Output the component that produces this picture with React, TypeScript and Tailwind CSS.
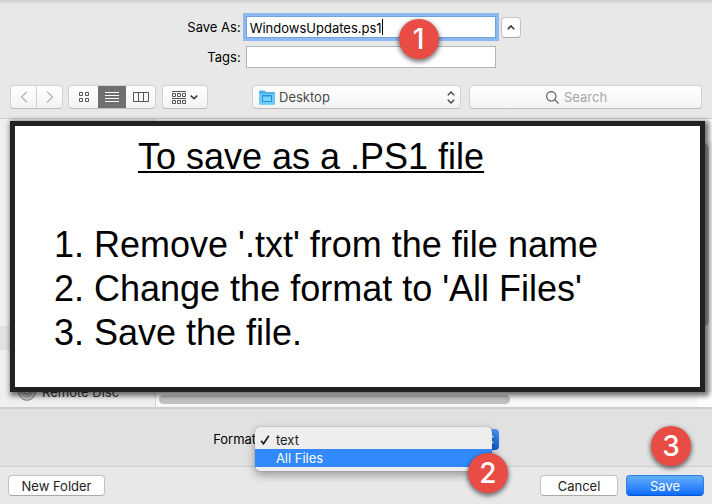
import type { ReactNode } from "react";

const steps = [
  "Remove '.txt' from the file name",
  "Change the format to 'All Files'",
  "Save the file.",
];

function Badge({ className, children }: { className: string; children: ReactNode }) {
  return (
    <span
      className={`absolute z-30 flex size-10 items-center justify-center rounded-full bg-[#e94b45] font-['Inter','Liberation_Sans',sans-serif] text-[28px] leading-8 font-medium text-white shadow-[0_2px_4px_1px_rgba(0,0,0,0.5)] ${className}`}
    >
      {children}
    </span>
  );
}

function ToolButton({ label, className, children }: { label: string; className: string; children: ReactNode }) {
  return (
    <button type="button" aria-label={label} className={`flex h-full items-center justify-center ${className}`}>
      {children}
    </button>
  );
}

const raised =
  "h-6 rounded-[4px] border border-[#d2d2d2] border-b-[#bdbdbd] bg-linear-to-b from-white to-[#f3f3f3]";
const pushButton =
  "h-[21px] rounded-[4px] border border-[#c3c3c3] border-b-[#a9a9a9] bg-white text-[13px] leading-4 text-[#222]";

function Toolbar() {
  return (
    <div className="flex items-center px-[10px] pt-[17px] pb-[9px]">
      <div className={`flex w-[53px] ${raised}`}>
        <ToolButton label="Back" className="flex-1 border-r border-[#d2d2d2]">
          <svg width="8" height="12" viewBox="0 0 8 12" fill="none" stroke="#b4b4b4" strokeWidth="1.3">
            <path d="M7 .7 1.5 6 7 11.3" />
          </svg>
        </ToolButton>
        <ToolButton label="Forward" className="flex-1">
          <svg width="8" height="12" viewBox="0 0 8 12" fill="none" stroke="#b4b4b4" strokeWidth="1.3">
            <path d="M1 .7 6.5 6 1 11.3" />
          </svg>
        </ToolButton>
      </div>
      <div className={`ml-[5px] flex w-[88px] ${raised}`}>
        <ToolButton label="Icon view" className="flex-1">
          <svg width="10" height="10" viewBox="0 0 10 10" fill="none" stroke="#555">
            <path d="M.5 .5h3v3h-3zM6.5 .5h3v3h-3zM.5 6.500h3v3h-3zM6.500 6.500h3v3h-3z" />
          </svg>
        </ToolButton>
        <ToolButton label="List view" className="w-7 shrink-0 bg-[#707070]">
          <svg width="14" height="10" viewBox="0 0 14 10" stroke="#fff">
            <path d="M0 .5h14M0 3.5h14M0 6.5h14M0 9.5h14" />
          </svg>
        </ToolButton>
        <ToolButton label="Column view" className="flex-1">
          <svg width="16" height="10" viewBox="0 0 16 10" fill="none" stroke="#555">
            <path d="M.5 .5h15v9H.5zM5.5 .5v9M10.5 .5v9" />
          </svg>
        </ToolButton>
      </div>
      <div className={`ml-[6px] w-[46px] ${raised}`}>
        <ToolButton label="Group items" className="w-full gap-1">
          <svg width="14" height="13" viewBox="0 0 14 13" fill="none" stroke="#555">
            <path d="M0 .5h14M0 7.5h14M.5 2.5h3v3h-3zM5.5 2.5h3v3h-3zM10.5 2.5h3v3h-3zM.5 9.5h3v3h-3zM5.5 9.5h3v3h-3zM10.5 9.5h3v3h-3z" />
          </svg>
          <svg width="8" height="5" viewBox="0 0 8 5" fill="none" stroke="#444" strokeWidth="1.700">
            <path d="m.7.7 3.300 3L7.300.7" />
          </svg>
        </ToolButton>
      </div>

      <div className={`relative ml-11 w-[209px] shrink-0 ${raised}`}>
        <svg className="pointer-events-none absolute top-1 left-[6px]" width="16" height="15" viewBox="0 0 16 15">
          <path d="M0 1.5Q0 .5 1 .5h4.5L7 2h8q1 0 1 1v10.500q0 1-1 1H1q-1 0-1-1z" fill="#4fb3ea" />
          <path d="M0 4h16v9.500q0 1-1 1H1q-1 0-1-1z" fill="#6ccbfa" />
          <path d="M3.500 5.500h9v6h-9z" fill="#7fd3fb" stroke="#2591d6" />
          <path d="M3 6h10" stroke="#2591d6" />
        </svg>
        <select aria-label="Location" className="h-full w-full appearance-none bg-transparent pl-[26px] text-[13px] leading-4 text-[#4a4a4a]">
          <option>Desktop</option>
        </select>
        <svg className="pointer-events-none absolute top-[5px] right-[5px]" width="8" height="13" viewBox="0 0 8 13" fill="none" stroke="#444" strokeWidth="1.4">
          <path d="M.8 4.300 4 1l3.200 3.300M.8 8.700 4 12l3.200-3.300" />
        </svg>
      </div>

      <label className={`ml-2 flex flex-1 items-center justify-center gap-[5px] ${raised}`}>
        <svg width="13" height="13" viewBox="0 0 13 13" fill="none" stroke="#555" strokeWidth="1.1">
          <circle cx="5.300" cy="5.300" r="4.700" />
          <path d="m8.700 8.700 3.800 3.800" />
        </svg>
        <input type="search" aria-label="Search" placeholder="Search" className="w-[61px] bg-transparent text-[13px] leading-4 placeholder:text-[#a5a5a5]" />
      </label>
    </div>
  );
}

function Browser() {
  return (
    <div className="relative flex min-h-[289px] border-t border-[#cfcfcf]">
      <div className="flex w-[156px] flex-col border-r border-[#d5d5d5] bg-[#efefef]">
        <div className="mt-[207px] h-6 bg-[#e2e2e2]" />
        <div className="mt-auto flex items-center gap-[6px] pb-[5px] pl-[18px] text-[13px] leading-5 text-[#333]">
          <svg width="18" height="18" viewBox="0 0 18 18" fill="none" stroke="#777">
            <circle cx="9" cy="9" r="8.300" fill="#c9c9c9" />
            <circle cx="9" cy="9" r="5" stroke="#999" />
            <circle cx="9" cy="9" r="2.500" fill="#ddd" />
          </svg>
          Remote Disc
        </div>
      </div>
      <div className="flex flex-1 flex-col justify-end bg-white">
        <div className="bg-[#f8f8f8] px-[3px] pt-[3px] pb-[3px]">
          <div className="h-[9px] w-[351px] rounded-full bg-[#c1c1c1]" />
        </div>
      </div>
      <div className="w-[15px] bg-white pt-[23px] pb-[15px]">
        <div className="h-full bg-[#f0f0f0] pt-[2px] pl-[3px]">
          <div className="h-[182px] w-[9px] rounded-full bg-[#b5b5b5]" />
        </div>
      </div>

      <section className="absolute top-[2px] right-[7px] left-[10px] z-10 border-5 border-[#222] bg-white pt-[9px] pb-8 font-['Liberation_Sans',Arial,sans-serif] text-[36px] leading-11 text-black shadow-[2px_2px_5px_2px_rgba(0,0,0,0.55)]">
        <h1 className="mr-[93px] text-center underline decoration-2 underline-offset-2 [text-decoration-skip-ink:none]">To save as a .PS1 file</h1>
        <ol className="mt-11 list-decimal pl-[79px]">
          {steps.map((step) => (
            <li key={step}>{step}</li>
          ))}
        </ol>
      </section>
    </div>
  );
}

function FormatRow() {
  return (
    <div className="relative flex justify-center gap-1 border-t-2 border-b border-t-[#cecece] border-b-[#cecece] bg-[#e1e1e1] pt-[20px] pb-4">
      <label htmlFor="format" className="leading-5">Format:</label>
      <div className="relative h-[21px] w-[235px]">
        <select id="format" defaultValue="text" className="h-full w-full appearance-none rounded-[4px] bg-linear-to-b from-[#4a97f5] to-[#0a5ad6] pl-2 text-transparent">
          <option value="text">text</option>
          <option value="all">All Files</option>
        </select>
        <svg className="pointer-events-none absolute top-1 right-[5px]" width="8" height="13" viewBox="0 0 8 13" fill="none" stroke="#fff" strokeWidth="1.4">
          <path d="M.8 4.300 4 1l3.200 3.300M.8 8.700 4 12l3.200-3.300" />
        </svg>
        <ul
          role="listbox"
          aria-label="Format"
          className="absolute -top-[2px] right-[7px] -left-[9px] z-20 rounded-[5px] bg-[#eeeeee] py-1 leading-[18px] shadow-[0_0_1px_rgba(0,0,0,0.5),0_4px_10px_rgba(0,0,0,0.35)]"
        >
          <li role="option" aria-selected="true" className="flex items-center gap-[6px] pl-[5px] text-[#222]">
            <svg width="10" height="10" viewBox="0 0 10 10" fill="none" stroke="#222" strokeWidth="1.7">
              <path d="m1 5.800 2.500 3L8.800.8" />
            </svg>
            text
          </li>
          <li role="option" aria-selected="false" className="bg-[#3189fd] pl-[21px] text-white">All Files</li>
        </ul>
        <Badge className="top-6 -right-[9px]">2</Badge>
      </div>
      <Badge className="top-[17px] right-[21px]">3</Badge>
    </div>
  );
}

export default function App() {
  return (
    <main className="flex min-h-screen flex-col bg-[#e8e8e8] font-['Inter','Liberation_Sans',sans-serif] text-[13px] leading-4 text-black">
      <div className="h-1 bg-linear-to-b from-[#cbcbcb] to-[#e8e8e8]" />
      <form className="flex flex-1 flex-col" onSubmit={(e) => e.preventDefault()}>
        <div className="flex justify-center pt-3 pr-1">
          <div className="grid grid-cols-[auto_250px_20px] items-center gap-x-[5px] gap-y-[8px]">
            <label htmlFor="name" className="text-right">Save As:</label>
            <div className="relative">
              <input
                id="name"
                type="text"
                defaultValue="WindowsUpdates.ps1"
                className="block h-[22px] w-full border border-[#6ea3e0] bg-white px-[3px] pt-px text-[13px] leading-4 ring-3 ring-[#8db8f0] outline-none"
              />
              <span className="absolute top-[3px] left-[136px] h-4 w-px bg-black" />
              <Badge className="top-[3px] left-[153px]">1</Badge>
            </div>
            <button type="button" aria-label="Collapse" className={`flex items-center justify-center ${pushButton}`}>
              <svg width="8" height="5" viewBox="0 0 8 5" fill="none" stroke="#333" strokeWidth="1.6">
                <path d="m.8 4.200L4 1l3.200 3.200" />
              </svg>
            </button>
            <label htmlFor="tags" className="text-right">Tags:</label>
            <input id="tags" type="text" className="h-[22px] w-full border border-[#b5b5b5] bg-white px-[3px] text-[13px] leading-4" />
          </div>
        </div>
        <Toolbar />
        <Browser />
        <FormatRow />
        <div className="flex gap-2 p-2">
          <button type="button" className={`w-[97px] ${pushButton}`}>New Folder</button>
          <button type="button" className={`ml-auto w-[78px] ${pushButton}`}>Cancel</button>
          <button type="submit" className="h-[21px] w-[78px] rounded-[4px] border border-[#2f7fea] border-b-[#0a57d5] bg-linear-to-b from-[#63aefb] to-[#0a6bfc] text-[13px] leading-4 text-white">
            Save
          </button>
        </div>
      </form>
    </main>
  );
}
